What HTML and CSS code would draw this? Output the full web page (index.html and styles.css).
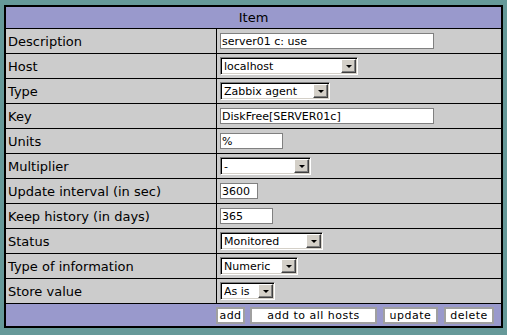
FILE: index.html
```html
<!DOCTYPE html>
<html>
<head>
  <title>Item</title>
  <link rel="stylesheet" href="styles.css">
</head>
<body>
  <form class="form">
    <div class="head">Item</div>

    <div class="label">Description</div>
    <div class="field"><input class="w-long" type="text" value="server01 c: use"></div>

    <div class="label">Host</div>
    <div class="field">
      <span class="select w-host"><select><option>localhost</option></select><span class="arrow"></span></span>
    </div>

    <div class="label">Type</div>
    <div class="field">
      <span class="select w-type"><select><option>Zabbix agent</option></select><span class="arrow"></span></span>
    </div>

    <div class="label">Key</div>
    <div class="field"><input class="w-long" type="text" value="DiskFree[SERVER01c]"></div>

    <div class="label">Units</div>
    <div class="field"><input class="w-units" type="text" value="%"></div>

    <div class="label">Multiplier</div>
    <div class="field">
      <span class="select w-mult"><select><option>-</option></select><span class="arrow"></span></span>
    </div>

    <div class="label">Update interval (in sec)</div>
    <div class="field"><input class="w-delay" type="text" value="3600"></div>

    <div class="label">Keep history (in days)</div>
    <div class="field"><input class="w-history" type="text" value="365"></div>

    <div class="label">Status</div>
    <div class="field">
      <span class="select w-status"><select><option>Monitored</option></select><span class="arrow"></span></span>
    </div>

    <div class="label">Type of information</div>
    <div class="field">
      <span class="select w-info"><select><option>Numeric</option></select><span class="arrow"></span></span>
    </div>

    <div class="label">Store value</div>
    <div class="field">
      <span class="select w-store"><select><option>As is</option></select><span class="arrow"></span></span>
    </div>

    <div class="foot">
      <button type="button" class="b-add">add</button>
      <button type="button" class="b-all">add to all hosts</button>
      <button type="button" class="b-update">update</button>
      <button type="button" class="b-delete">delete</button>
    </div>
  </form>
</body>
</html>
```

FILE: styles.css
```css
body {
  margin: 0;
  padding: 5px 4px 0 4px;
  background-color: #669999;
  font-family: "DejaVu Sans", Verdana, sans-serif;
  font-size: 13px;
  color: #000;
}
.form {
  display: grid;
  grid-template-columns: 211px 284px;
  width: 499px;
  box-sizing: border-box;
  margin: 0;
  border: 2px solid #000;
  background-color: #cccccc;
}
.head {
  grid-column: 1 / 3;
  height: 21px;
  line-height: 21px;
  text-align: center;
  background-color: #9999cc;
  border-bottom: 1px solid #000;
}
.label, .field {
  display: flex;
  align-items: center;
  height: 24px;
  border-bottom: 1px solid #000;
}
.label {
  padding-left: 2px;
  border-right: 1px solid #000;
}
.field {
  padding-left: 3px;
}
input {
  box-sizing: border-box;
  height: 16px;
  border: 1px solid #808080;
  background: #fff;
  font-family: "DejaVu Sans", Verdana, sans-serif;
  font-size: 11px;
  padding: 0 1px;
  margin: 0;
  color: #000;
}
.w-long { width: 214px; }
.w-units { width: 63px; }
.w-delay { width: 38px; }
.w-history { width: 53px; }

/* old style drop downs */
.select {
  position: relative;
  display: inline-block;
  box-sizing: border-box;
  height: 18px;
  border: 1px solid;
  border-color: #808080 #fff #fff #808080;
  box-shadow: inset 1px 1px #000, inset -1px -1px #d4d0c8;
  background: #fff;
}
.select select {
  -webkit-appearance: none;
  appearance: none;
  display: block;
  width: 100%;
  height: 16px;
  border: none;
  background: transparent;
  font-family: "DejaVu Sans", Verdana, sans-serif;
  font-size: 11px;
  padding: 0 0 0 3px;
  margin: 0;
  color: #000;
}
.select .arrow {
  position: absolute;
  top: 1px;
  right: 1px;
  box-sizing: border-box;
  width: 15px;
  height: 14px;
  background: #d4d0c8;
  border: 1px solid;
  border-color: #fff #404040 #404040 #fff;
  box-shadow: inset -1px -1px #808080;
}
.select .arrow:after {
  content: "";
  position: absolute;
  left: 4px;
  top: 5px;
  border-left: 3px solid transparent;
  border-right: 3px solid transparent;
  border-top: 3px solid #000;
}
.w-host { width: 138px; }
.w-type { width: 110px; }
.w-mult { width: 91px; }
.w-status { width: 103px; }
.w-info { width: 78px; }
.w-store { width: 55px; }

.foot {
  grid-column: 1 / 3;
  display: flex;
  align-items: center;
  justify-content: flex-end;
  gap: 5px;
  height: 22px;
  padding-right: 7px;
  background-color: #9999cc;
}
.foot button {
  box-sizing: border-box;
  height: 17px;
  padding: 0;
  background: #fff;
  border: 2px solid #a0a0a0;
  font-family: "DejaVu Sans", Verdana, sans-serif;
  font-size: 11px;
  color: #000;
  letter-spacing: 0.5px;
}
.b-add { width: 29px; }
.b-all { width: 127px; margin-right: 1px; }
.b-update { width: 55px; margin-right: 1px; }
.b-delete { width: 50px; }
```
